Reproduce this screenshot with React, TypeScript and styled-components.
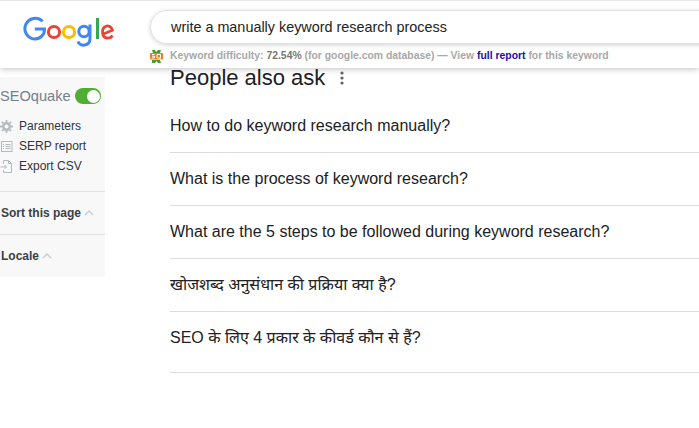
import React from "react";
import styled, { createGlobalStyle } from "styled-components";

const Global = createGlobalStyle`
  html, body { margin: 0; padding: 0; background: #fff; overflow: hidden; }
  body { font-family: "Liberation Sans", Arial, "Noto Sans Devanagari", "Noto Sans", sans-serif; color: #202124; }
`;

const Page = styled.div`
  width: 699px;
  height: 428px;
  overflow: hidden;
  position: relative;
`;

const Header = styled.header`
  position: relative;
  z-index: 2;
  height: 68px;
  background: #fff;
  border-top: 1px solid #e8e8e8;
  box-sizing: border-box;
  box-shadow: 0 1px 6px rgba(32, 33, 36, 0.28);
  display: grid;
  grid-template-columns: 150px 1fr;
`;

const LogoCell = styled.div`
  padding: 14px 0 0 22px;
`;

const SearchColumn = styled.div`
  padding-top: 9px;
  display: flex;
  flex-direction: column;
`;

const SearchBox = styled.div`
  height: 34px;
  width: 580px;
  box-sizing: border-box;
  border: 1px solid #dfe1e5;
  border-radius: 17px;
  box-shadow: 0 1px 4px rgba(32, 33, 36, 0.2);
  padding-left: 20px;
  display: flex;
  align-items: center;
  font-size: 14.4px;
  color: #222;
`;

const KeywordBar = styled.div`
  margin-top: 5px;
  height: 13px;
  display: flex;
  align-items: center;
  gap: 7px;
  font-size: 10.4px;
  font-weight: 700;
  color: #a8a8a8;
  white-space: pre;
`;

const KeywordText = styled.span`
  white-space: pre;
`;

const Score = styled.b`
  color: #777;
`;

const ReportLink = styled.a`
  color: #1a0dab;
`;

const Body = styled.main`
  display: grid;
  grid-template-columns: 105px 1fr;
  column-gap: 65px;
`;

const Sidebar = styled.aside`
  margin-top: 9px;
  width: 105px;
  height: 200px;
  background: #f8f8f8;
  display: flex;
  flex-direction: column;
  box-sizing: border-box;
`;

const BrandRow = styled.div`
  display: flex;
  align-items: center;
  justify-content: space-between;
  height: 20px;
  margin-top: 9px;
  padding-right: 4px;
  font-size: 14.6px;
  color: #71808e;
`;

const Toggle = styled.span`
  width: 26px;
  height: 16px;
  border-radius: 8px;
  background: #4fae33;
  display: flex;
  justify-content: flex-end;
  align-items: center;
  padding-right: 1px;
  box-sizing: border-box;
`;

const Knob = styled.span`
  width: 13px;
  height: 13px;
  border-radius: 50%;
  background: #fff;
`;

const Menu = styled.div`
  margin-top: 10px;
  display: flex;
  flex-direction: column;
`;

const MenuItem = styled.div`
  height: 20px;
  display: flex;
  align-items: center;
  gap: 6px;
  font-size: 12px;
  color: #2f3540;
`;

const IconSlot = styled.span`
  width: 13px;
  height: 13px;
  display: flex;
  flex: none;
  color: #b4bbbe;
`;

const Section = styled.div<{ $height: number }>`
  height: ${(p) => p.$height}px;
  border-top: 1px solid #e4e4e4;
  display: flex;
  align-items: center;
  gap: 3px;
  padding-left: 1px;
  font-size: 12px;
  font-weight: 700;
  color: #39404a;
`;

const Content = styled.section`
  display: flex;
  flex-direction: column;
`;

const Heading = styled.h2`
  margin: -2px 0 0;
  height: 23px;
  display: flex;
  align-items: center;
  gap: 15px;
  font-size: 22px;
  font-weight: 400;
  line-height: 23px;
  color: #202124;
`;

const Questions = styled.div`
  margin-top: 11px;
`;

const Question = styled.div<{ $height?: number }>`
  height: ${(p) => p.$height ?? 53}px;
  box-sizing: border-box;
  border-bottom: 1px solid #dadce0;
  padding-top: 16px;
  font-size: 16px;
  line-height: 20px;
  color: #202124;
  white-space: nowrap;
`;

const GoogleLogo = () => (
  <svg width="92" height="32" viewBox="0 0 92 32" fill="none" aria-label="Google">
    <path d="M20.6 6.2A10.4 10.4 0 1 0 12.6 24a9.6 9.6 0 0 0 9.9-10H12.8" stroke="#4285f4" strokeWidth="3" />
    <circle cx="32" cy="17" r="5.6" stroke="#ea4335" strokeWidth="3" />
    <circle cx="47" cy="17" r="5.6" stroke="#fbbc05" strokeWidth="3" />
    <circle cx="62" cy="16.5" r="5.2" stroke="#4285f4" strokeWidth="3" />
    <path d="M68 9.5V23.5c0 8-10.5 8.500-12 3" stroke="#4285f4" strokeWidth="3" />
    <path d="M75.500 3V24" stroke="#34a853" strokeWidth="3" />
    <path d="M81.500 19l9-3.800C89 11 85.800 10.500 84 11.300c-5 2-4.500 11 .8 11.700 2.300.3 4.500-.6 5.700-2.500" stroke="#ea4335" strokeWidth="2.800" />
  </svg>
);

const SeoIcon = () => (
  <svg width="13" height="14" viewBox="0 0 13 14" style={{ flex: "none" }}>
    <path d="M2 1h3l1 2 2-2h3l-1 3H3zM2 11h8l1 3H8L6.500 12 5 14H2z" fill="#4d9a32" />
    <rect x="0" y="4" width="13" height="6.500" fill="#f47b14" rx="1" />
    <path d="M2 5.500h2.500M2 7.200h2.500v1.800H1.500M7 5.500h3.500V9H7zM9 9l2 1.500" stroke="#fff" strokeWidth="1" fill="none" />
  </svg>
);

const Gear = () => (
  <svg viewBox="0 0 13 13" width="13" height="13">
    <circle cx="6.500" cy="6.500" r="3.300" fill="none" stroke="currentColor" strokeWidth="2.400" />
    <path d="M6.500 0v13M0 6.500h13M1.900 1.900l9.200 9.200M11.100 1.900l-9.200 9.200" stroke="currentColor" strokeWidth="1.800" strokeDasharray="2.200 8.600 2.200" />
  </svg>
);

const ListIcon = () => (
  <svg viewBox="0 0 13 13" width="13" height="13" fill="none" stroke="currentColor">
    <rect x="1.500" y="1.500" width="10.500" height="10" />
    <path d="M3 4.500h1M5.500 4.500h5M3 6.500h1M5.500 6.500h5M3 8.500h1M5.500 8.500h5" />
  </svg>
);

const ExportIcon = () => (
  <svg viewBox="0 0 13 13" width="13" height="13" fill="none" stroke="currentColor">
    <path d="M3.500 4V.5h5l3 3v9h-8V10M8.500.5v3h3M.5 7h6M4.500 5l2 2-2 2" />
  </svg>
);

const Chevron = () => (
  <svg width="10" height="6" viewBox="0 0 10 6" fill="none" stroke="#c4ccce" strokeWidth="1.300">
    <path d="M1 5l4-4 4 4" />
  </svg>
);

const Dots = () => (
  <svg width="4" height="14" viewBox="0 0 4 14" fill="#5f6368">
    <circle cx="2" cy="2" r="1.600" />
    <circle cx="2" cy="7" r="1.600" />
    <circle cx="2" cy="12" r="1.600" />
  </svg>
);

const questions = [
  "How to do keyword research manually?",
  "What is the process of keyword research?",
  "What are the 5 steps to be followed during keyword research?",
  "खोजशब्द अनुसंधान की प्रक्रिया क्या है?",
];

export default function App() {
  return (
    <Page>
      <Global />
      <Header>
        <LogoCell>
          <GoogleLogo />
        </LogoCell>
        <SearchColumn>
          <SearchBox>write a manually keyword research process</SearchBox>
          <KeywordBar>
            <SeoIcon />
            <KeywordText>
              Keyword difficulty: <Score>72.54%</Score> (for google.com database) — View{" "}
              <ReportLink>full report</ReportLink> for this keyword
            </KeywordText>
          </KeywordBar>
        </SearchColumn>
      </Header>
      <Body>
        <Sidebar>
          <BrandRow>
            SEOquake
            <Toggle>
              <Knob />
            </Toggle>
          </BrandRow>
          <Menu>
            <MenuItem>
              <IconSlot><Gear /></IconSlot>
              Parameters
            </MenuItem>
            <MenuItem>
              <IconSlot><ListIcon /></IconSlot>
              SERP report
            </MenuItem>
            <MenuItem>
              <IconSlot><ExportIcon /></IconSlot>
              Export CSV
            </MenuItem>
          </Menu>
          <Section $height={42} style={{ marginTop: 15 }}>
            Sort this page <Chevron />
          </Section>
          <Section $height={42}>
            Locale <Chevron />
          </Section>
        </Sidebar>
        <Content>
          <Heading>
            People also ask <Dots />
          </Heading>
          <Questions>
            {questions.map((q) => (
              <Question key={q}>{q}</Question>
            ))}
            <Question $height={61}>SEO के लिए 4 प्रकार के कीवर्ड कौन से हैं?</Question>
          </Questions>
        </Content>
      </Body>
    </Page>
  );
}
